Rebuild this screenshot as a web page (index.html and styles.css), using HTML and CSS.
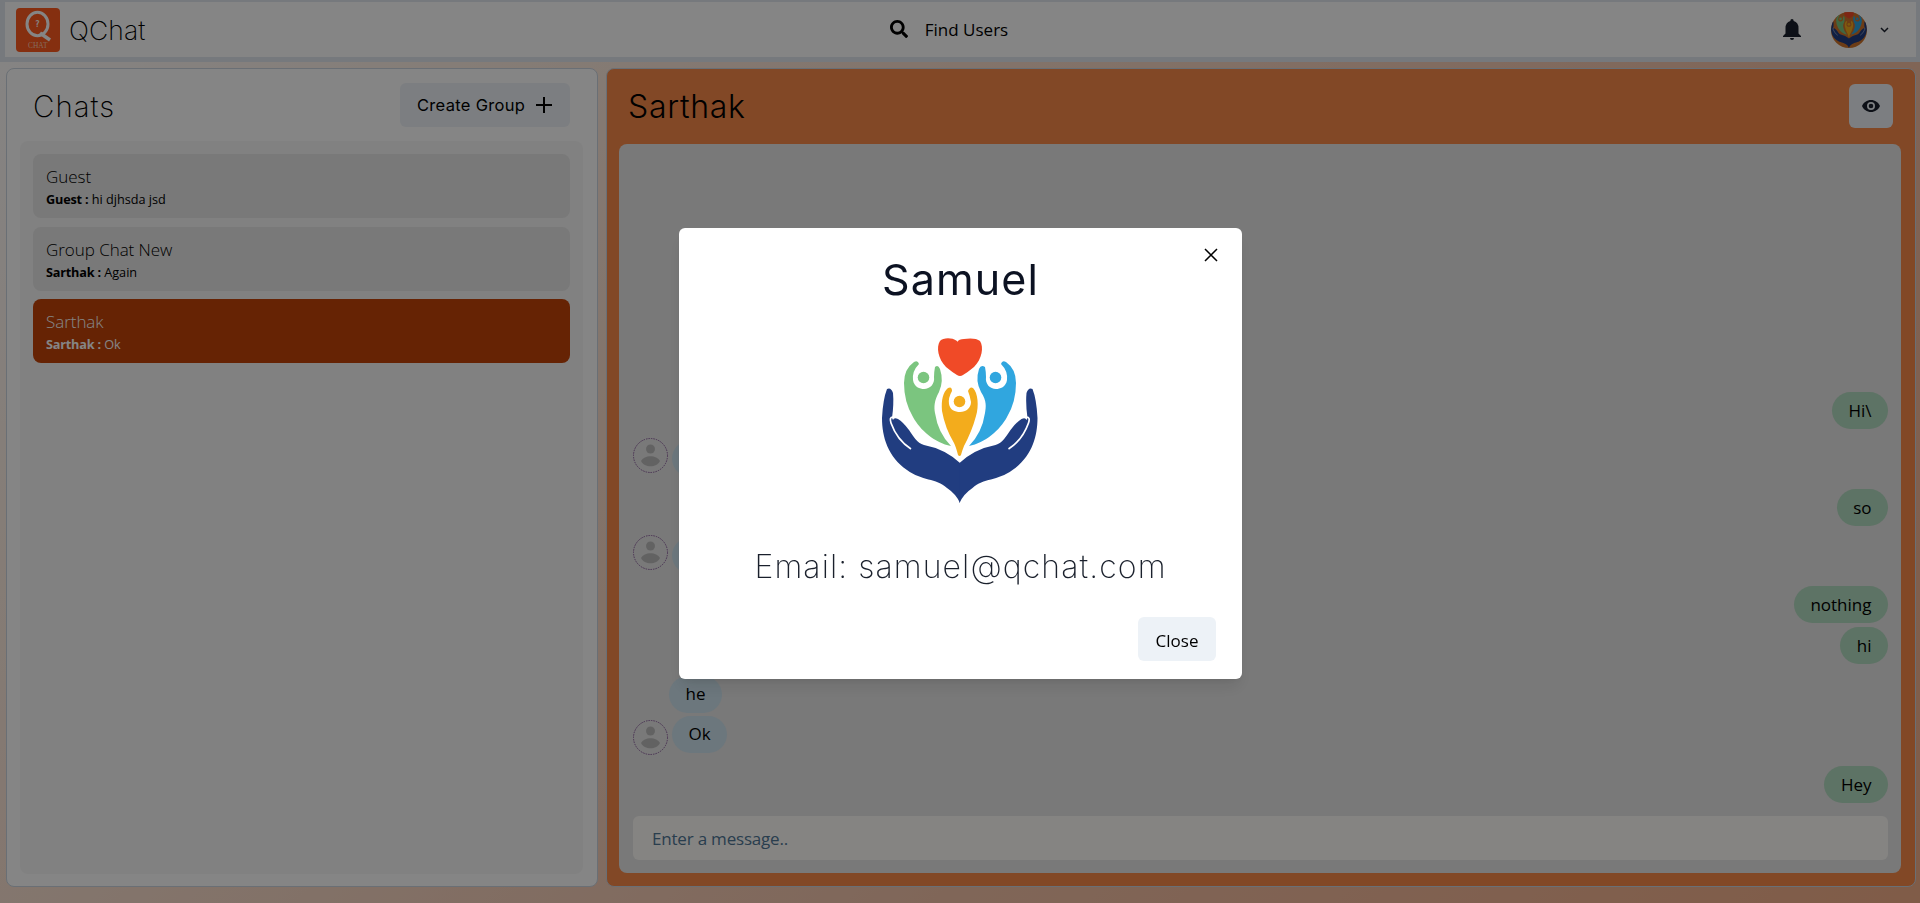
FILE: index.html
```html
<!DOCTYPE html>
<html lang="en">
<head>
<meta charset="utf-8">
<title>QChat</title>
<link rel="stylesheet" href="styles.css">
</head>
<body>
<svg class="defs" aria-hidden="true">
  <symbol id="hands" viewBox="0 0 200 200">
    <path fill="#f04a27" d="M97 21C91 17 83 18 80 21C76 27 78 39 86 47Q92 52 97 55Q100 57 103 55Q108 52 114 47C122 39 124 27 120 21C117 18 109 18 104 19Q99 19 97 22Z"/>
    <g fill="#7bc57f"><circle cx="63.500" cy="57.500" r="5.800"/><path d="M54 42Q58 40 59 44Q52 51 53 60C54 67 60 69 64 69C70 69 75 64 74 57Q74 52 75 47Q78 44 80 49Q84 61 79 72C74 81 74 87 75 93Q78 113 91 126C75 123 60 110 53 97Q44 82 44 63Q44 49 54 42Z"/></g>
    <g fill="#30a6df"><circle cx="135.500" cy="57.500" r="5.800"/><path d="M146 42Q142 40 141 44Q148 51 147 60C146 67 140 69 136 69C130 69 125 64 126 57Q126 52 125 47Q121 44 119 49Q115 61 121 72C127 81 126 87 125 93Q122 113 109 126C125 123 140 110 147 97Q156 82 156 63Q156 49 146 42Z"/></g>
    <g fill="#f3ac1c"><circle cx="99.500" cy="81.500" r="5.800"/><path d="M88 68Q92 66 92 71Q88 78 89 84C90 90 95 92 100 92C106 92 111 88 111 82Q110 76 108 71Q110 66 113 68C118 73 119 86 116 96Q112 111 104 126Q102 131 101 135Q99.500 137 98 135Q96 127 94 123Q85 108 82 91C81 80 83 72 88 68Z"/></g>
    <g id="hand"><path fill="#213d80" d="M100 143Q85 129 64 125C57 123 53 116 49 110Q43 102 38 99Q34 97 33 100L32 98Q34 84 33 73Q31 67 27 69Q23 79 22 98C22 117 28 137 47 150C62 161 76 158 87 168Q96 174 100 183Z"/><path class="palm" d="M33 97Q29 97 31 103Q37 120 51 129"/></g>
    <use href="#hand" transform="matrix(-1 0 0 1 199.500 0)"/>
  </symbol>
  <symbol id="person" viewBox="0 0 35 35"><circle class="person-ring" cx="17.500" cy="17.500" r="17"/><circle class="person-fill" cx="17.500" cy="11" r="4.500"/><path class="person-fill" d="M8 23C11 16.500 24 16.500 27 23C24 30 11 30 8 23Z"/></symbol>
</svg>

<div class="app">
  <header class="topbar">
    <div class="brand">
      <svg class="logo" viewBox="0 0 44 44"><rect width="44" height="44" rx="4" fill="#ff5a1f"/><ellipse cx="21.500" cy="16" rx="10.500" ry="11.800" fill="none" stroke="#fff" stroke-width="3"/><path d="M24 25L34 32" stroke="#fff" stroke-width="3.500"/><text class="logo-mark" x="21.500" y="19">?</text><text class="logo-word" x="12" y="40" textLength="19.500" lengthAdjust="spacingAndGlyphs">CHAT</text></svg>
      <span class="brand-name">QChat</span>
    </div>
    <div class="find"><svg viewBox="0 0 512 512" width="18" height="18"><path d="M505 442.700L405.300 343c-4.500-4.500-10.600-7-17-7H372c27.600-35.300 44-79.700 44-128C416 93.100 322.900 0 208 0S0 93.100 0 208s93.100 208 208 208c48.300 0 92.700-16.400 128-44v16.300c0 6.400 2.500 12.500 7 17l99.700 99.700c9.400 9.400 24.600 9.400 33.900 0l28.300-28.300c9.400-9.400 9.400-24.600.1-34zM208 336c-70.700 0-128-57.200-128-128 0-70.700 57.200-128 128-128 70.700 0 128 57.200 128 128 0 70.700-57.200 128-128 128z"/></svg><span>Find Users</span></div>
    <div class="account">
      <svg class="bell" viewBox="0 0 18 21"><path d="M9 0Q10.700 0 10.700 2Q15.500 3.500 15.500 9V14.500L18 17V18H0V17L2.500 14.500V9Q2.500 3.500 7.300 2Q7.300 0 9 0ZM7 19H11Q11 21 9 21Q7 21 7 19Z"/></svg>
      <span class="avatar"><svg viewBox="22 28 156 156"><use href="#hands" width="200" height="200"/></svg></span>
      <svg class="chevron" viewBox="0 0 9 6"><path d="M1 1L4.500 4.500L8 1"/></svg>
    </div>
  </header>

  <main class="panels">
    <section class="chats">
      <div class="chats-head"><h2>Chats</h2><button class="create"><span>Create Group</span><svg viewBox="0 0 18 18"><path d="M9 1V17M1 9H17"/></svg></button></div>
      <div class="chat-list">
        <div class="chat"><p>Guest</p><small><b>Guest :</b> hi djhsda jsd</small></div>
        <div class="chat"><p>Group Chat New</p><small><b>Sarthak :</b> Again</small></div>
        <div class="chat selected"><p>Sarthak</p><small><b>Sarthak :</b> Ok</small></div>
      </div>
    </section>
    <section class="room">
      <div class="room-head"><h2>Sarthak</h2><button class="eye"><svg viewBox="0 0 18 12"><path fill-rule="evenodd" d="M9 0C13 0 16.500 2.500 18 6C16.500 9.500 13 12 9 12S1.500 9.500 0 6C1.500 2.500 5 0 9 0ZM9 2A4 4 0 1 0 9 10A4 4 0 1 0 9 2ZM9 3.700A2.300 2.300 0 1 1 9 8.300A2.300 2.300 0 1 1 9 3.700Z"/></svg></button></div>
      <div class="room-body">
        <div class="messages">
          <div class="row mine"><span class="bubble">Hi\</span></div>
          <div class="row theirs near high"><svg class="face"><use href="#person"/></svg><span class="bubble">hello</span></div>
          <div class="row mine after"><span class="bubble">so</span></div>
          <div class="row theirs near high"><svg class="face"><use href="#person"/></svg><span class="bubble">what</span></div>
          <div class="row mine after"><span class="bubble">nothing</span></div>
          <div class="row mine tight"><span class="bubble">hi</span></div>
          <div class="row theirs plain"><span class="bubble">he</span></div>
          <div class="row theirs last"><svg class="face"><use href="#person"/></svg><span class="bubble">Ok</span></div>
          <div class="row mine end"><span class="bubble">Hey</span></div>
        </div>
        <div class="entry">Enter a message..</div>
      </div>
    </section>
  </main>
</div>

<div class="overlay">
  <div class="modal">
    <svg class="dismiss" viewBox="0 0 14 14"><path d="M1 1L13 13M13 1L1 13"/></svg>
    <h1>Samuel</h1>
    <svg class="portrait"><use href="#hands"/></svg>
    <p class="email">Email: samuel@qchat.com</p>
    <button class="close">Close</button>
  </div>
</div>
</body>
</html>
```
FILE: styles.css
```css
* { box-sizing: border-box; margin: 0; padding: 0; }
body { height: 903px; overflow: hidden; font: 17px/24px "Open Sans", "Noto Sans", sans-serif; color: #000; }
.defs { position: absolute; width: 0; height: 0; }
button { border: 0; border-radius: 6px; background: #edf2f7; font: inherit; color: inherit; }
h1, h2, .brand-name, .email, .create { font-family: Inter, "Liberation Sans", sans-serif; }

.app { height: 903px; display: flex; flex-direction: column; background: linear-gradient(135deg, #fff 0%, #ffeee2 20%, #f5c4aa 65%, #f5b08a 100%); }
.topbar { height: 62px; flex: none; border: solid #e2e8f0; border-width: 2px 4px 5px 5px; background: #fff; display: grid; grid-template-columns: 1fr auto 1fr; align-items: center; padding: 0 27px 0 11px; }
.brand { display: flex; align-items: center; gap: 9px; }
.logo { width: 44px; height: 44px; }
.logo-mark { font: bold 8px "DejaVu Sans Mono", monospace; fill: #fff; text-anchor: middle; }
.logo-word { font: 7.5px "Liberation Serif", serif; fill: #ffc9b0; }
.brand-name { font-size: 26.5px; font-weight: 250; letter-spacing: .1px; }
.find { display: flex; align-items: center; gap: 17px; font-weight: 500; margin-right: 7px; }
.find svg { margin-top: -2px; }
.find span { padding-top: 1px; }
.account { display: flex; justify-content: flex-end; align-items: center; }
.bell { width: 18px; height: 21px; margin-right: 30px; fill: #1a202c; }
.avatar { width: 36px; height: 36px; border-radius: 50%; background: #cf742b; overflow: hidden; margin-right: 13px; }
.avatar svg { display: block; width: 36px; height: 36px; }
.avatar .palm { stroke: #cf742b; }
.chevron { width: 9px; height: 6px; }
.chevron path { fill: none; stroke: #1a202c; stroke-width: 1.5; }

.panels { flex: 1; min-height: 0; display: grid; grid-template-columns: 592px 1310px; gap: 8px; padding: 6px 4px 16px 6px; }
.chats { border: 1px solid #cbd5e0; border-radius: 8px; background: #fff; padding: 14px 14px 12px 13px; display: flex; flex-direction: column; }
.chats-head { height: 44px; display: flex; justify-content: space-between; align-items: center; padding: 0 13px 0 13px; margin-bottom: 14px; }
h2 { font-weight: 250; font-size: 29.5px; line-height: 44px; letter-spacing: 1px; padding-top: 1px; }
.create { width: 170px; height: 44px; display: flex; align-items: center; justify-content: space-between; padding: 0 17px; font-size: 16.5px; letter-spacing: .3px; }
.create svg { width: 18px; height: 18px; flex: none; fill: none; stroke: #000; stroke-width: 2; }
.create span { white-space: nowrap; }
.chat-list { flex: 1; border-radius: 8px; background: #f8f8f8; padding: 13px 13px 0; display: flex; flex-direction: column; gap: 8.5px; }
.chat { height: 64px; border-radius: 8px; background: #e8e8e8; padding: 11px 13px; }
.chat p { line-height: 24px; letter-spacing: -.05px; font-weight: 350; }
.chat small { display: block; font-size: 12.7px; line-height: 21px; }
.chat b { letter-spacing: -.2px; }
.chat.selected { background: #c44309; color: #fff; }

.room { border: 1px solid #cbd5e0; border-radius: 8px; background: #fa8a49; padding: 15px 14px 13px 12px; display: flex; flex-direction: column; }
.room-head { display: flex; justify-content: space-between; height: 44px; padding: 0 8px 0 9px; margin-bottom: 16px; }
.room-head h2 { font-weight: 350; font-size: 32px; letter-spacing: .7px; }
.eye { width: 44px; height: 44px; display: grid; place-items: center; }
.eye svg { width: 18px; height: 12px; fill: #1a202c; }
.room-body { flex: 1; min-height: 0; border-radius: 8px; background: #e8e8e8; padding: 13px 13px 13px 14px; display: flex; flex-direction: column; gap: 13px; }
.messages { flex: 1; display: flex; flex-direction: column; justify-content: flex-end; }
.row { height: 37px; display: flex; }
.mine { justify-content: flex-end; }
.bubble { height: 37px; line-height: 38px; border-radius: 20px; padding: 0 16.5px; background: #b3dcc1; font-weight: 370; }
.theirs .bubble { background: #cfe4ef; line-height: 36px; }
.near { margin-top: 11px; }
.after { margin-top: 12px; }
.tight { margin-top: 4px; }
.plain { margin-top: 12px; padding-left: 36px; }
.last { margin-top: 3px; }
.end { margin-top: 13px; }
.face { width: 35px; height: 35px; margin: 4px 4px 0 0; }
.high .face { margin-top: -2px; }
.person-ring { fill: none; stroke: #8c5f9e; stroke-dasharray: 1.500 1; stroke-width: 1; }
.person-fill { fill: #bdbdbd; }
.entry { height: 44px; flex: none; border-radius: 6px; background: #fffdf9; padding: 0 19px; line-height: 45px; color: #4f7796; letter-spacing: -.2px; }

.overlay { position: fixed; inset: 0; display: flex; justify-content: center; align-items: flex-start; padding: 228px 0 0 1px; background: rgba(0, 0, 0, .48); }
.modal { position: relative; width: 563px; height: 451px; border-radius: 6px; background: #fff; color: #1a202c; box-shadow: 0 10px 15px -3px rgba(0, 0, 0, .1), 0 4px 6px -2px rgba(0, 0, 0, .05); display: flex; flex-direction: column; align-items: center; }
.dismiss { position: absolute; top: 20px; right: 24px; width: 14px; height: 14px; fill: none; stroke: #000; stroke-width: 1.500; }
h1 { margin-top: 21px; height: 60px; font-size: 43px; line-height: 60px; font-weight: 380; letter-spacing: 1.1px; color: #0c1222; }
.portrait { width: 200px; height: 200px; margin: 11px 1px 0 0; }
.palm { fill: none; stroke: #fff; stroke-width: 1.700; }
.email { margin-top: 25px; font-size: 32px; line-height: 44px; font-weight: 200; letter-spacing: 1.1px; }
.close { align-self: flex-end; width: 78px; height: 44px; margin: 28px 26px 0 0; padding-top: 3px; color: #000; font-weight: 500; }
```
